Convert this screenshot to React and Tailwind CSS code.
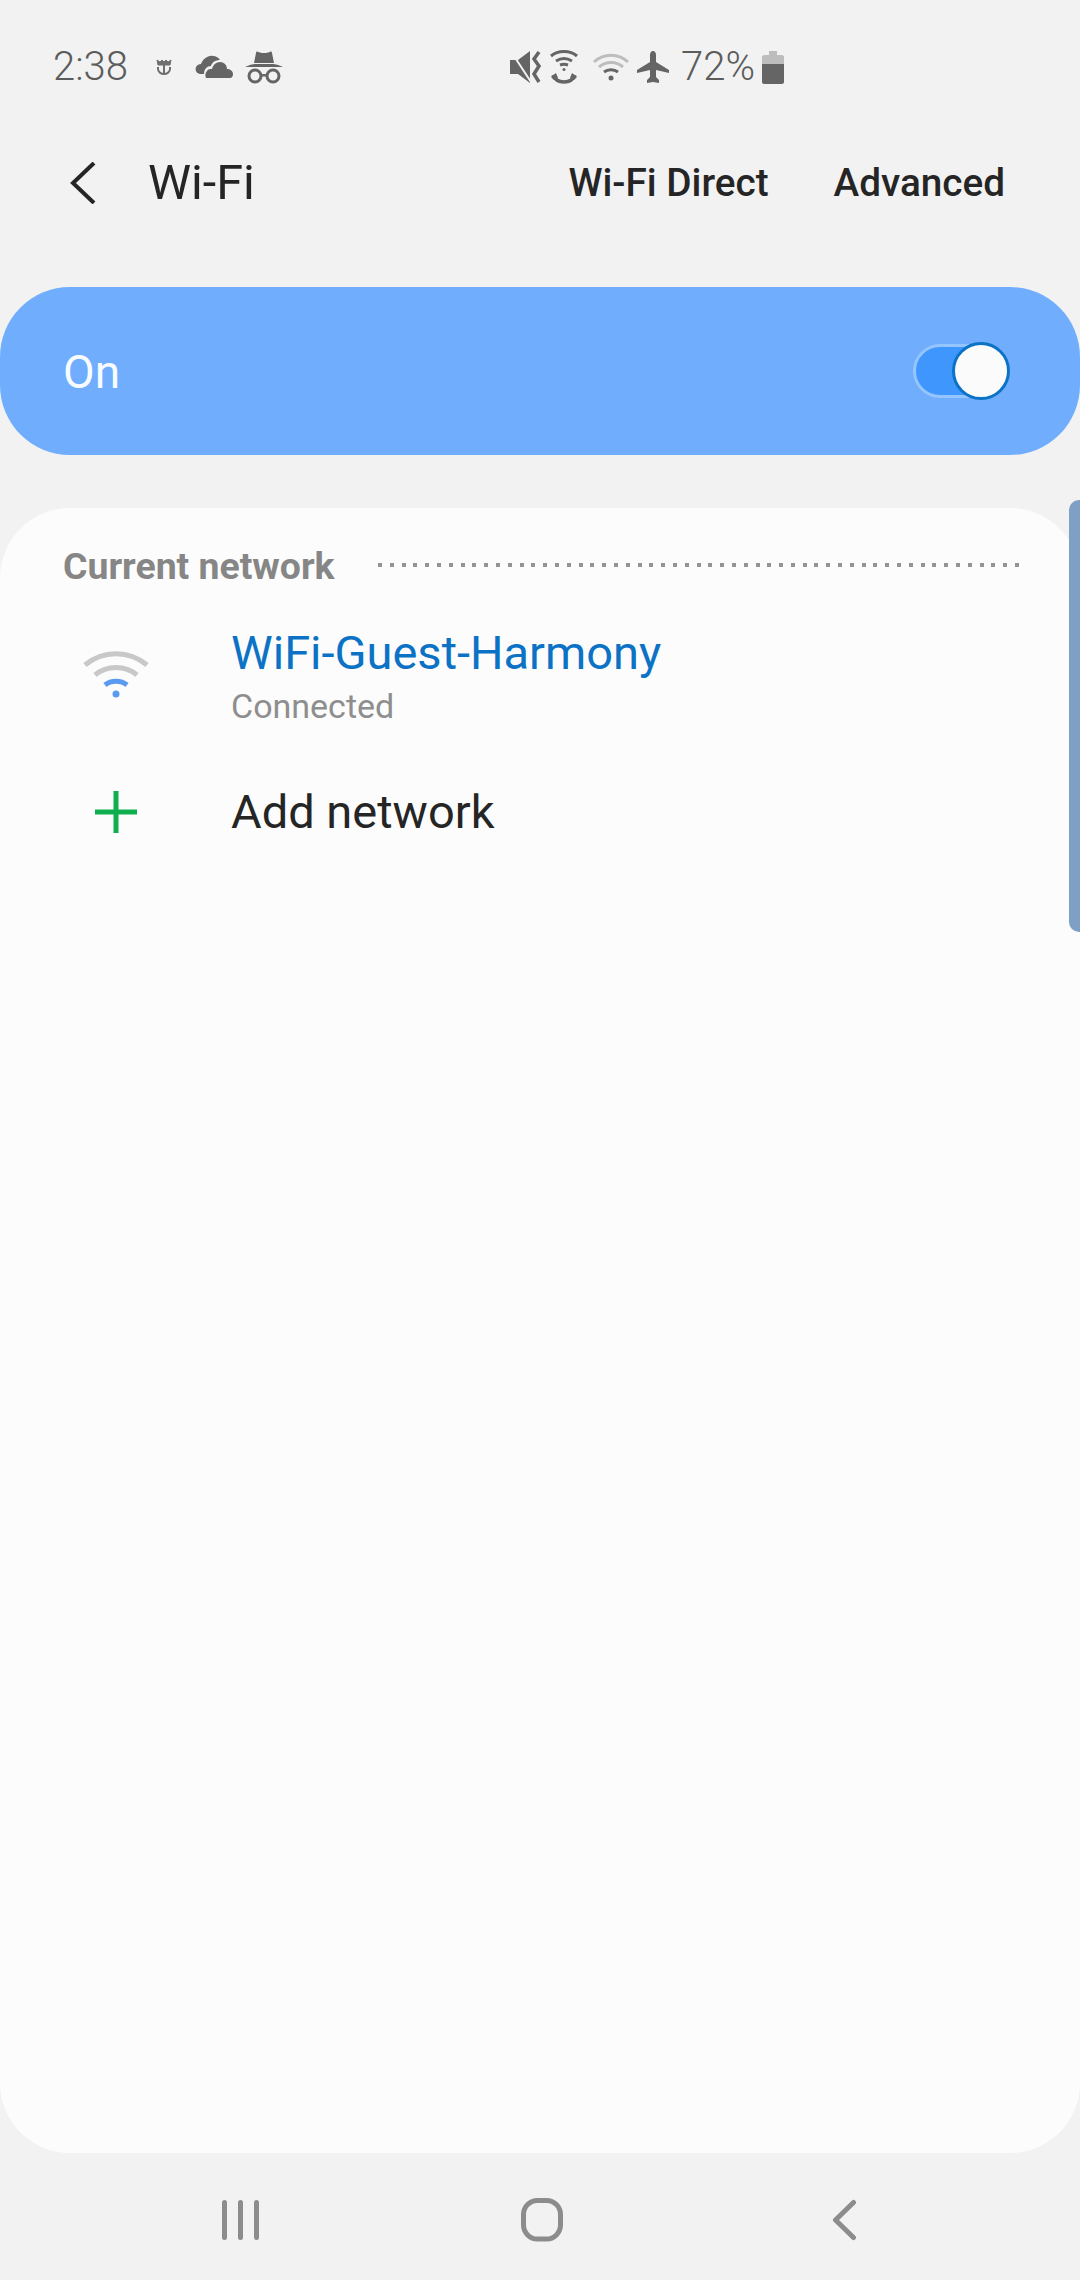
import React from "react";

const dots = Array.from({ length: 55 });

function CrownIcon() {
  return (
    <svg width="16" height="16" viewBox="0 0 16 16" fill="none" stroke="#6f6f6f" strokeWidth="2">
      <path d="M1 1l1 5h12l1-5-3 2-2-2-2 2-2-2-2 2z" fill="#6f6f6f" strokeWidth="1" />
      <path d="M8 6v9" />
      <path d="M2 8v2c0 3 3 5 6 5s6-2 6-5V8" />
    </svg>
  );
}

function CloudIcon() {
  return (
    <svg width="38" height="24" viewBox="0 0 38 24" fill="#656565">
      <path d="M5 19C1 18 0 15 1 12c1-2 3-3 5-3 2-5 7-9 12-8 3 0 6 2 7 4-4 0-8 2-9 6-4 0-7 3-7 8z" />
      <path d="M11 23c-1-2-1-5 1-7 1-2 3-2 5-2 1-4 4-7 8-7 4 0 7 3 7 7 3 0 6 2 6 5 0 2-1 4-3 4z" />
    </svg>
  );
}

function IncognitoIcon() {
  return (
    <svg width="38" height="33" viewBox="0 0 38 33" fill="#656565">
      <path d="M9 12L11 2c0-1 1-2 2-1l4 1h4l4-1c1-1 2 0 2 1l2 10z" />
      <path d="M0 16c4-2 8-3 10-3h18c2 0 6 1 10 3z" />
      <circle cx="10" cy="25" r="6" fill="none" stroke="#656565" strokeWidth="3" />
      <circle cx="28" cy="25" r="6" fill="none" stroke="#656565" strokeWidth="3" />
      <path d="M15 23h8v2.500h-8z" />
    </svg>
  );
}

function MuteVibrateIcon() {
  return (
    <svg width="32" height="32" viewBox="0 0 32 32" fill="#656565">
      <path d="M0 9h8L20 0v32L8 23H0z" />
      <path d="M2 2l19 29" stroke="#f2f2f2" strokeWidth="2" fill="none" />
      <path d="M29 1l-5 7 5 7-5 8 5 8" fill="none" stroke="#656565" strokeWidth="3.500" />
    </svg>
  );
}

function WifiCallIcon() {
  return (
    <svg width="28" height="34" viewBox="0 0 28 34" fill="none" stroke="#656565" strokeWidth="3">
      <path d="M1 6c7-6 19-6 26 0" />
      <path d="M6 11c5-3 11-3 16 0" />
      <path d="M10 15c3-1 5-1 8 0" />
      <circle cx="14" cy="19.500" r="1.500" fill="#656565" stroke="none" />
      <path d="M3 25c2 5 6 7 11 7s9-2 11-7" strokeWidth="3.500" />
      <path d="M1 27l5-4 2 5-4 2zM27 27l-5-4-2 5 4 2z" fill="#656565" stroke="none" />
    </svg>
  );
}

function WifiIcon() {
  return (
    <svg width="36" height="28" viewBox="0 0 36 28" fill="none" strokeWidth="3">
      <path d="M1 9c10-9 24-9 34 0" stroke="#bdbdbd" />
      <path d="M6 14c7-6 17-6 24 0" stroke="#bdbdbd" />
      <path d="M11 19c4-3 10-3 14 0" stroke="#656565" />
      <circle cx="18" cy="25" r="2.500" fill="#656565" stroke="none" />
    </svg>
  );
}

function PlaneIcon() {
  return (
    <svg width="32" height="32" viewBox="0 0 32 32" fill="#656565">
      <path d="M16 0c2 0 3 2 3 4v7l13 8v3l-13-3v7l3 3v3l-6-1-6 1v-3l3-3v-7L0 22v-3l13-8V4c0-2 1-4 3-4z" />
    </svg>
  );
}

function BatteryIcon() {
  return (
    <svg width="22" height="33" viewBox="0 0 22 33">
      <path d="M7 0h8v4h5c1 0 2 1 2 2v7H0V6c0-1 1-2 2-2h5z" fill="#bdbdbd" />
      <path d="M0 13h22v18c0 1-1 2-2 2H2c-1 0-2-1-2-2z" fill="#656565" />
    </svg>
  );
}

function StatusBar() {
  return (
    <div className="flex items-center h-[134px] pl-[53px] text-[#5c5c5c] font-light text-[40px]">
      <span className="w-[103px]">2:38</span>
      <CrownIcon />
      <span className="ml-[23px]"><CloudIcon /></span>
      <span className="ml-[12px]"><IncognitoIcon /></span>
      <span className="ml-[227px]"><MuteVibrateIcon /></span>
      <span className="ml-[8px]"><WifiCallIcon /></span>
      <span className="ml-[15px]"><WifiIcon /></span>
      <span className="ml-[8px]"><PlaneIcon /></span>
      <span className="ml-[12px] w-[81px]">72%</span>
      <BatteryIcon />
    </div>
  );
}

function Header() {
  return (
    <div className="flex items-center h-[98px] text-[#252525]">
      <svg className="ml-[70px]" width="26" height="42" viewBox="0 0 26 42" fill="none" stroke="#252525" strokeWidth="4">
        <path d="M24 1L3 21l21 20" />
      </svg>
      <h1 className="ml-[52px] text-[48.500px] leading-none">Wi-Fi</h1>
      <span className="ml-auto text-[38.700px] font-medium">Wi-Fi Direct</span>
      <span className="ml-[65px] mr-[75px] text-[38.700px] font-medium">Advanced</span>
    </div>
  );
}

function WifiToggleBar() {
  return (
    <div className="flex items-center justify-between h-[168px] mt-[55px] pl-[63px] pr-[75px] rounded-[70px] bg-[#70adfc]">
      <span className="mt-[2px] text-[46px] text-[#f8fcff]">On</span>
      <div className="relative w-[92px] h-[54px] rounded-full bg-[#3f96fd] border-[3px] border-[#94c5fd]">
        <div className="absolute right-[-8px] top-[-5px] w-[58px] h-[58px] rounded-full bg-[#fbfbfb] border-[3px] border-[#0b72c6]"></div>
      </div>
    </div>
  );
}

function NetworkCard() {
  return (
    <div className="flex-1 mt-[53px] rounded-[70px] bg-[#fcfcfc] pt-[34px]">
      <div className="flex items-center pl-[63px] h-[48px]">
        <span className="w-[315px] text-[37.400px] font-bold text-[#868686]">Current network</span>
        <div className="flex gap-[7.800px] mt-[-3px]">
          {dots.map((_, i) => (
            <span key={i} className="w-[4px] h-[4px] bg-[#949494]"></span>
          ))}
        </div>
      </div>

      <div className="flex items-center h-[108px] mt-[35px]">
        <div className="w-[231px] flex justify-center">
          <svg className="mt-[-10px]" width="66" height="50" viewBox="0 0 66 50" fill="none" strokeWidth="5">
            <path d="M2 16c18-15 44-15 62 0" stroke="#c8c8c8" />
            <path d="M12 26c12-10 30-10 42 0" stroke="#c8c8c8" />
            <path d="M22 36c6-5 16-5 22 0" stroke="#5a9bf0" />
            <circle cx="33" cy="45" r="3.500" fill="#5a9bf0" stroke="none" />
          </svg>
        </div>
        <div className="flex flex-col">
          <span className="text-[47px] leading-[54px] text-[#0b72c6]">WiFi-Guest-Harmony</span>
          <span className="text-[34px] leading-[52px] text-[#8e8e8e]">Connected</span>
        </div>
      </div>

      <div className="flex items-center h-[90px] mt-[34px]">
        <div className="w-[231px] flex justify-center">
          <svg width="42" height="42" viewBox="0 0 42 42" fill="#0fae4f">
            <path d="M18.500 0h5v18.500H42v5H23.500V42h-5V23.500H0v-5h18.500z" />
          </svg>
        </div>
        <span className="text-[47px] text-[#252525]">Add network</span>
      </div>
    </div>
  );
}

function NavBar() {
  return (
    <div className="flex items-center h-[127px] pt-[7px]">
      <svg className="ml-[221px]" width="39" height="42" viewBox="0 0 39 42" fill="none" stroke="#8c8c8c" strokeWidth="5" strokeLinecap="round">
        <path d="M3.500 3.500v35M19.500 3.500v35M35.500 3.500v35" />
      </svg>
      <svg className="ml-[261px]" width="42" height="44" viewBox="0 0 42 44" fill="none" stroke="#8c8c8c" strokeWidth="5">
        <rect x="2.500" y="2.500" width="37" height="38.500" rx="14" />
      </svg>
      <svg className="ml-[269px]" width="25" height="42" viewBox="0 0 25 42" fill="none" stroke="#8c8c8c" strokeWidth="5" strokeLinecap="round" strokeLinejoin="round">
        <path d="M21.500 3.500L3.500 21l18 17.500" />
      </svg>
    </div>
  );
}

export default function App() {
  return (
    <div className="relative flex flex-col w-[1080px] h-[2280px] overflow-hidden bg-[#f2f2f2] font-['Roboto',sans-serif]">
      <StatusBar />
      <Header />
      <WifiToggleBar />
      <NetworkCard />
      <NavBar />
      <div className="absolute right-0 top-[500px] w-[11px] h-[432px] rounded-l-[10px] bg-[#7da0c4]"></div>
    </div>
  );
}
